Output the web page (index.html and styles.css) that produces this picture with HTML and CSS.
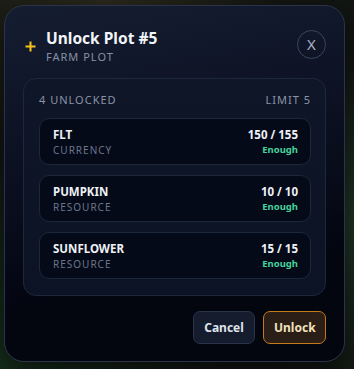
FILE: index.html
```html
<!DOCTYPE html>
<html lang="en">
<head>
    <meta charset="UTF-8">
    <meta name="viewport" content="width=device-width, initial-scale=1.0">
    <title>Unlock Plot #5</title>
    <link rel="stylesheet" href="styles.css">
</head>
<body>
    <div class="modal">
        <div class="modal-head">
            <span class="plus">
                <svg width="11" height="11" viewBox="0 0 11 11"><path d="M5.5 0.5v10M0.5 5.5h10" stroke="#f5c31c" stroke-width="2"/></svg>
            </span>
            <div class="head-text">
                <h1>Unlock Plot #5</h1>
                <p class="subtitle">FARM PLOT</p>
            </div>
            <button class="close">X</button>
        </div>

        <div class="panel">
            <div class="panel-top">
                <span>4 UNLOCKED</span>
                <span>LIMIT 5</span>
            </div>
            <div class="req">
                <div>
                    <div class="req-name">FLT</div>
                    <div class="req-type">CURRENCY</div>
                </div>
                <div class="req-right">
                    <div class="req-count">150 / 155</div>
                    <div class="req-ok">Enough</div>
                </div>
            </div>
            <div class="req">
                <div>
                    <div class="req-name">PUMPKIN</div>
                    <div class="req-type">RESOURCE</div>
                </div>
                <div class="req-right">
                    <div class="req-count">10 / 10</div>
                    <div class="req-ok">Enough</div>
                </div>
            </div>
            <div class="req">
                <div>
                    <div class="req-name">SUNFLOWER</div>
                    <div class="req-type">RESOURCE</div>
                </div>
                <div class="req-right">
                    <div class="req-count">15 / 15</div>
                    <div class="req-ok">Enough</div>
                </div>
            </div>
        </div>

        <div class="actions">
            <button class="btn btn-cancel">Cancel</button>
            <button class="btn btn-unlock">Unlock</button>
        </div>
    </div>
</body>
</html>
```

FILE: styles.css
```css
html, body {
    height: 100%;
}
body {
    margin: 0;
    font-family: "Noto Sans", "Open Sans", sans-serif;
    background:
        radial-gradient(circle at 0% 100%, #16301c 0, transparent 45%),
        radial-gradient(circle at 30% 0%, #2c2a1c 0, transparent 40%),
        radial-gradient(circle at 100% 60%, #1f3424 0, transparent 40%),
        #121612;
    overflow: hidden;
}
.modal {
    box-sizing: border-box;
    width: 341px;
    height: 357px;
    margin: 5px 0 0 4px;
    padding: 22px 18px 19px;
    border: 1px solid #2a3349;
    border-radius: 20px;
    background: linear-gradient(170deg, #151d31 0%, #0a0f1f 45%, #03050f 75%);
    box-shadow: 0 10px 30px rgba(0, 0, 0, 0.6);
    display: flex;
    flex-direction: column;
}
.modal-head {
    display: flex;
    align-items: flex-start;
    height: 37px;
}
.plus {
    display: flex;
    width: 11px;
    margin: 13px 10px 0 2px;
}
.head-text {
    flex: 1;
}
h1 {
    margin: 0;
    font-size: 15.5px;
    line-height: 21px;
    font-weight: 700;
    color: #f2f4f8;
}
.subtitle {
    margin: 1px 0 0;
    font-size: 11px;
    line-height: 14px;
    letter-spacing: 1px;
    color: #8791a5;
}
.close {
    width: 29px;
    height: 29px;
    margin: 2px 0 0;
    padding: 0;
    border: 1px solid #3a465c;
    border-radius: 50%;
    background: transparent;
    color: #a9b2c3;
    font-family: "Noto Sans", sans-serif;
    font-size: 15px;
    line-height: 27px;
}
.panel {
    margin-top: 14px;
    padding: 14px 14px 16px 15px;
    border: 1px solid #1e283c;
    border-radius: 13px;
    background: linear-gradient(180deg, #0f1628 0%, #0c1324 100%);
    display: flex;
    flex-direction: column;
    gap: 10px;
}
.panel-top {
    display: flex;
    justify-content: space-between;
    font-size: 11px;
    line-height: 14px;
    letter-spacing: 1px;
    color: #8a93a6;
    padding: 0 0 1px;
}
.req {
    box-sizing: border-box;
    height: 47px;
    padding: 0 12px 0 13px;
    border: 1px solid #1d273a;
    border-radius: 10px;
    background: #050a19;
    display: flex;
    justify-content: space-between;
    align-items: center;
}
.req-name, .req-count {
    font-size: 11.5px;
    line-height: 16px;
    font-weight: 700;
    color: #eef1f6;
}
.req-type {
    font-size: 10px;
    line-height: 14px;
    letter-spacing: 1px;
    color: #6c768a;
}
.req-right {
    text-align: right;
}
.req-ok {
    font-size: 9.5px;
    line-height: 14px;
    font-weight: 700;
    color: #45d39b;
}
.actions {
    margin-top: 15px;
    display: flex;
    justify-content: flex-end;
    gap: 8px;
}
.btn {
    height: 33px;
    padding: 0 10px;
    border-radius: 7px;
    font-family: "Noto Sans", sans-serif;
    font-size: 12px;
    font-weight: 700;
}
.btn-cancel {
    width: 62px;
    border: 1px solid #29334a;
    background: #141c2e;
    color: #dfe3ea;
}
.btn-unlock {
    width: 63px;
    border: 1px solid #c47a18;
    background: #2a1e17;
    color: #f2e2bd;
}
```
